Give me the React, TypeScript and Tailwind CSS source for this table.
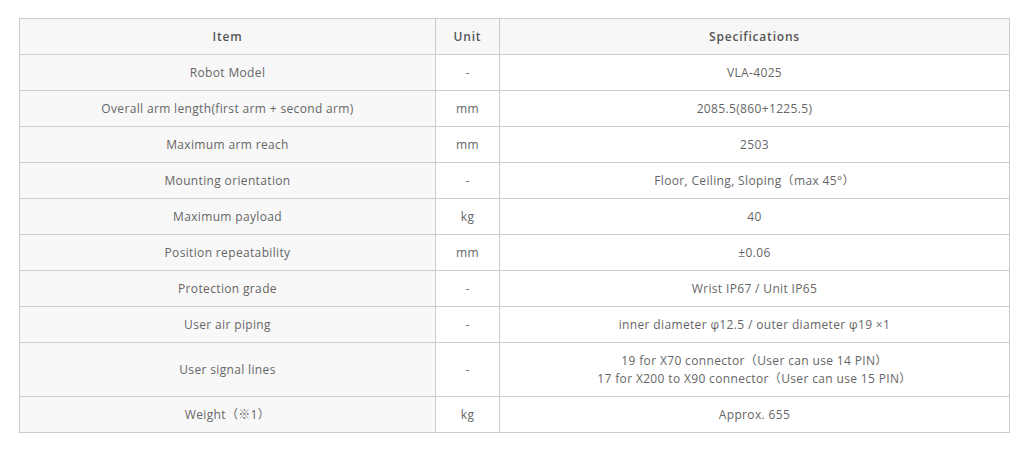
import React from "react";

// Spec rows: [item, unit, spec lines]
const ROWS: [string, string, string[]][] = [
  ["Robot Model", "-", ["VLA-4025"]],
  ["Overall arm length(first arm + second arm)", "mm", ["2085.5(860+1225.5)"]],
  ["Maximum arm reach", "mm", ["2503"]],
  ["Mounting orientation", "-", ["Floor, Ceiling, Sloping（max 45°）"]],
  ["Maximum payload", "kg", ["40"]],
  ["Position repeatability", "mm", ["±0.06"]],
  ["Protection grade", "-", ["Wrist IP67 / Unit IP65"]],
  ["User air piping", "-", ["inner diameter φ12.5 / outer diameter φ19 ×1"]],
  [
    "User signal lines",
    "-",
    [
      "19 for X70 connector（User can use 14 PIN）",
      "17 for X200 to X90 connector（User can use 15 PIN）",
    ],
  ],
  ["Weight（※1）", "kg", ["Approx. 655"]],
];

const cell = "border border-[#cccccc] px-2 pt-[9px] pb-[8px] text-center align-middle leading-[18px]";

export default function App() {
  return (
    <div
      className="min-h-screen bg-white pt-[18px] pl-[19px] text-[12px] tracking-[0.35px] text-[#666666]"
      style={{ fontFamily: '"Open Sans", "Noto Sans CJK JP", sans-serif' }}
    >
      <table className="w-[990px] table-fixed border-collapse">
        <colgroup>
          <col className="w-[416px]" />
          <col className="w-[64px]" />
          <col className="w-[510px]" />
        </colgroup>
        <thead>
          <tr className="bg-[#f7f7f7] text-[#555555]">
            <th className={`${cell} font-semibold tracking-[0.8px]`}>Item</th>
            <th className={`${cell} font-semibold tracking-[0.8px]`}>Unit</th>
            <th className={`${cell} font-semibold tracking-[0.8px]`}>Specifications</th>
          </tr>
        </thead>
        <tbody>
          {ROWS.map(([item, unit, spec]) => (
            <tr key={item}>
              <td className={`${cell} bg-[#f8f8f8]`}>{item}</td>
              <td className={cell}>{unit}</td>
              <td className={cell}>
                {spec.map((line) => (
                  <div key={line}>{line}</div>
                ))}
              </td>
            </tr>
          ))}
        </tbody>
      </table>
    </div>
  );
}
